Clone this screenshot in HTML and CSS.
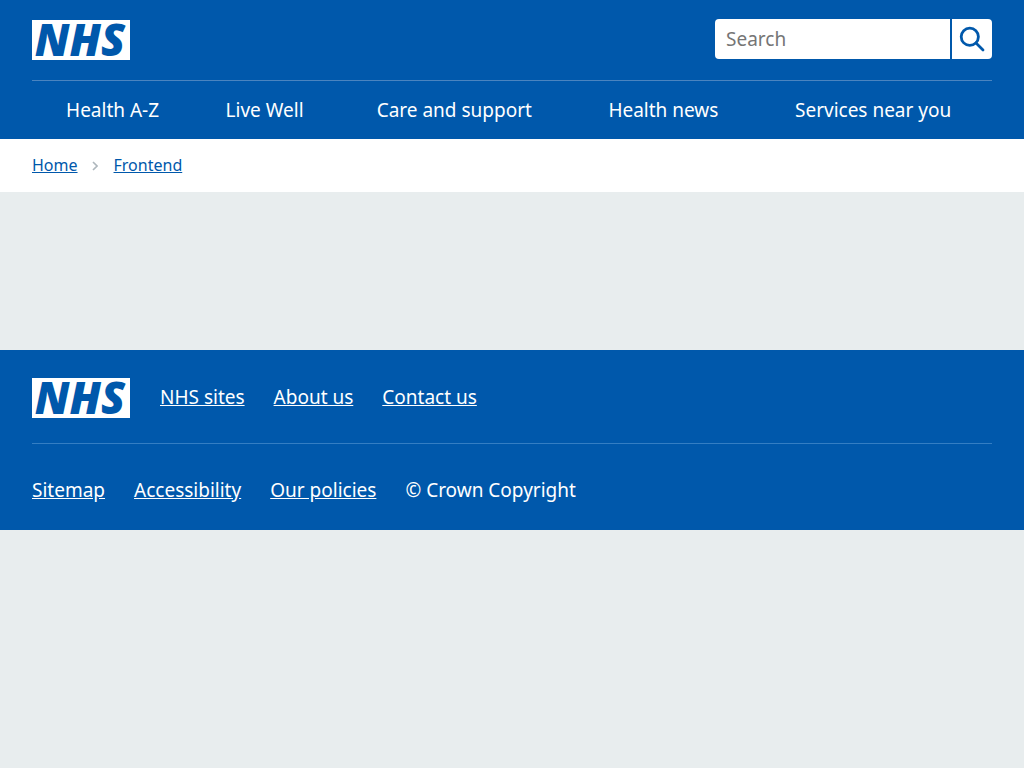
FILE: index.html
```html
<!DOCTYPE html>
<html lang="en">
<head>
<meta charset="utf-8">
<meta name="viewport" content="width=device-width, initial-scale=1">
<title>NHS Frontend</title>
<link rel="stylesheet" href="styles.css">
</head>
<body>
<header class="header">
  <div class="header-top">
    <a class="logo" href="#" aria-label="NHS home">
      <svg viewBox="0 0 98 40" aria-hidden="true"><rect width="98" height="40" fill="#fff"/><text class="logo-text" x="48" y="36" text-anchor="middle">NHS</text></svg>
    </a>
    <form class="search" role="search">
      <input class="search-input" type="search" placeholder="Search" aria-label="Search the NHS website">
      <button class="search-button" type="button" aria-label="Search">
        <svg class="search-icon" viewBox="0 0 26 26" aria-hidden="true"><circle cx="10.8" cy="10.8" r="8.6"/><path d="M17 17l7 7"/></svg>
      </button>
    </form>
  </div>
  <nav class="nav" aria-label="Primary">
    <ul class="nav-list">
      <li><a href="#">Health A-Z</a></li>
      <li><a href="#">Live Well</a></li>
      <li><a href="#">Care and support</a></li>
      <li><a href="#">Health news</a></li>
      <li><a href="#">Services near you</a></li>
    </ul>
  </nav>
</header>
<nav class="breadcrumb" aria-label="Breadcrumb">
  <a href="#">Home</a>
  <svg class="chevron" viewBox="0 0 6 10" aria-hidden="true"><path d="M1 1l4 4-4 4"/></svg>
  <a href="#">Frontend</a>
</nav>
<main class="main"></main>
<footer class="footer">
  <div class="footer-top">
    <a class="logo" href="#" aria-label="NHS home">
      <svg viewBox="0 0 98 40" aria-hidden="true"><rect width="98" height="40" fill="#fff"/><text class="logo-text" x="48" y="36" text-anchor="middle">NHS</text></svg>
    </a>
    <ul class="links">
      <li><a href="#">NHS sites</a></li>
      <li><a href="#">About us</a></li>
      <li><a href="#">Contact us</a></li>
    </ul>
  </div>
  <ul class="links links-legal">
    <li><a href="#">Sitemap</a></li>
    <li><a href="#">Accessibility</a></li>
    <li><a href="#">Our policies</a></li>
    <li>© Crown Copyright</li>
  </ul>
</footer>
</body>
</html>
```
FILE: styles.css
```css
* { box-sizing: border-box; }
body {
  margin: 0;
  background: #e8edee;
  font: 19px/28px "Noto Sans", "Open Sans", sans-serif;
}
ul { list-style: none; margin: 0; padding: 0; }
.header, .footer { background: #0058ab; color: #fff; padding: 0 32px; }
.header-top {
  display: flex;
  justify-content: space-between;
  align-items: center;
  height: 80px;
}
.logo { flex: none; display: block; width: 98px; height: 40px; }
.logo svg { display: block; width: 98px; height: 40px; overflow: visible; }
.logo-text {
  font: italic 800 44px "Open Sans", sans-serif;
  fill: #0058ab;
}
.search { display: flex; gap: 2px; height: 40px; margin-bottom: 2px; }
.search-input {
  width: 235px;
  border: 0;
  border-radius: 4px 0 0 4px;
  padding: 0 11px;
  background: #fff;
  font: inherit;
  appearance: none;
}
.search-input::placeholder { color: #757575; opacity: 1; }
.search-button {
  width: 40px;
  border: 0;
  border-radius: 0 4px 4px 0;
  padding: 7px;
  background: #fff;
}
.search-icon { display: block; width: 26px; height: 26px; fill: none; stroke: #0058ab; stroke-width: 2.8; stroke-linecap: round; }
.nav { border-top: 1px solid #4a84c0; }
.nav-list { display: table; width: 100%; }
.nav-list li { display: table-cell; text-align: center; padding: 15px 20px; }
.nav a { color: #fff; text-decoration: none; white-space: nowrap; }
.breadcrumb {
  display: flex;
  align-items: center;
  background: #fff;
  padding: 14px 32px 15px;
  font-size: 16px;
  line-height: 24px;
}
.breadcrumb a { color: #0058ab; }
.chevron { width: 6px; height: 10px; margin: 2px 16px 0 14px; fill: none; stroke: #aeb7bd; stroke-width: 1.6; }
.main { height: 158px; }
.footer-top {
  display: flex;
  gap: 30px;
  padding: 28px 0 25px;
  border-bottom: 1px solid #347ec3;
}
.footer-top .links { padding-top: 5px; }
.links { display: flex; flex-wrap: wrap; gap: 0 29px; }
.links a { color: #fff; }
.links-legal { padding: 32px 0 26px; }
```
